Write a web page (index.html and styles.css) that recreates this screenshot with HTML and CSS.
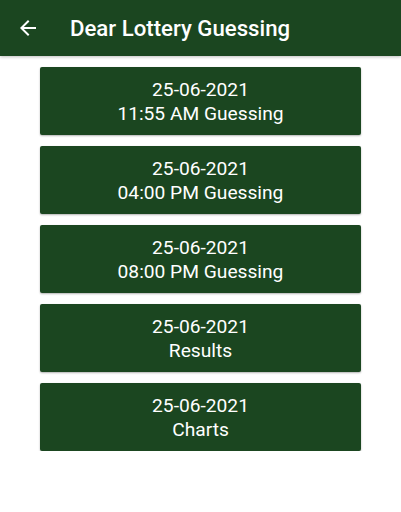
FILE: index.html
```html
<!DOCTYPE html>
<html lang="en">
<head>
  <meta charset="UTF-8">
  <meta name="viewport" content="width=device-width, initial-scale=1.0">
  <title>Dear Lottery Guessing</title>
  <link rel="stylesheet" href="styles.css">
</head>
<body>
  <header class="appbar">
    <button class="back" aria-label="Back">
      <svg width="24" height="24" viewBox="0 0 24 24"><path d="M20 11H7.83l5.59-5.59L12 4l-8 8 8 8 1.41-1.41L7.83 13H20v-2z" fill="#fff"/></svg>
    </button>
    <h1 class="title">Dear Lottery Guessing</h1>
  </header>
  <main class="list">
    <button class="item">25-06-2021<br>11:55 AM Guessing</button>
    <button class="item">25-06-2021<br>04:00 PM Guessing</button>
    <button class="item">25-06-2021<br>08:00 PM Guessing</button>
    <button class="item">25-06-2021<br>Results</button>
    <button class="item">25-06-2021<br>Charts</button>
  </main>
</body>
</html>
```

FILE: styles.css
```css
:root {
  --green: #1b4620;
}
* { box-sizing: border-box; }
body {
  margin: 0;
  font-family: Roboto, "Noto Sans", sans-serif;
  background: #fff;
}
.appbar {
  height: 56px;
  background: var(--green);
  display: flex;
  align-items: center;
  padding-left: 16px;
  box-shadow: 0 1px 3px rgba(0, 0, 0, 0.25);
}
.back {
  background: none;
  border: none;
  padding: 0;
  width: 24px;
  height: 24px;
  display: flex;
}
.title {
  margin: 0 0 0 30px;
  color: #fff;
  font-size: 22.2px;
  font-weight: 500;
}
.list {
  display: flex;
  flex-direction: column;
  align-items: center;
  gap: 11px;
  padding-top: 11px;
}
.item {
  width: 321px;
  height: 68px;
  padding: 2px 0 0;
  border: none;
  border-radius: 2px;
  background: var(--green);
  color: #fff;
  font-family: Roboto, sans-serif;
  font-size: 19.2px;
  line-height: 24px;
  box-shadow: 0 1px 2px rgba(0, 0, 0, 0.3);
}
```
